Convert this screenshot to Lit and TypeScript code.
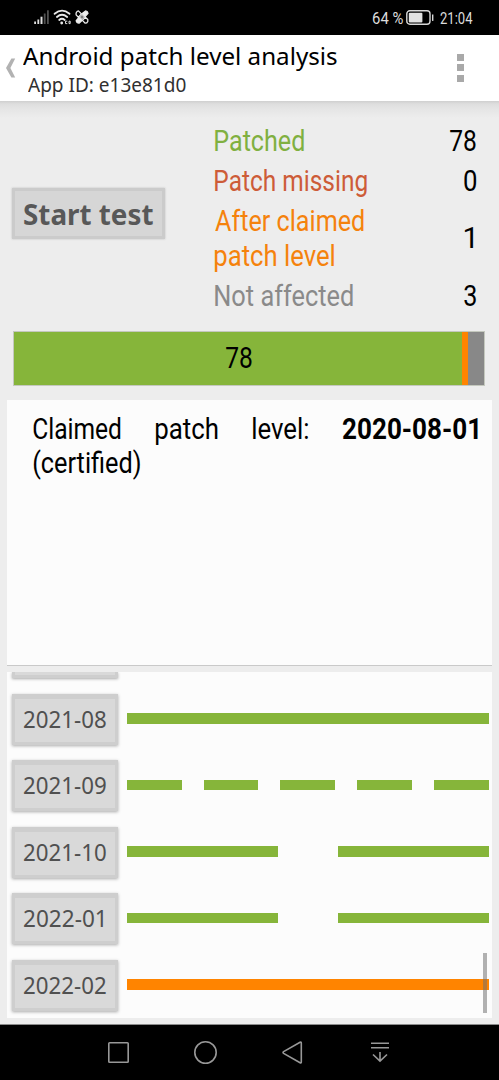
import { LitElement, html, css, svg } from "lit";
import { customElement, property } from "lit/decorators.js";

/** One line of text whose visible ink spans exactly `w` pixels. */
@customElement("fit-text")
class FitText extends LitElement {
  @property() text = "";
  @property({ type: Number }) w = 0;

  static styles = css`
    :host { display: block; flex: none; white-space: nowrap; }
    .ink { display: inline-block; transform-origin: 0 0; }
  `;

  render() {
    const cs = getComputedStyle(this);
    const ctx = document.createElement("canvas").getContext("2d")!;
    ctx.font = `${cs.fontWeight} ${cs.fontSize} ${cs.fontFamily}`;
    const m = ctx.measureText(this.text);
    const k = this.w / (m.actualBoundingBoxLeft + m.actualBoundingBoxRight);
    this.style.width = `${this.w}px`;
    return html`<span class="ink" style="transform: translateX(${m.actualBoundingBoxLeft * k}px) scaleX(${k})">${this.text}</span>`;
  }
}

interface Row { label: string; w: number; parts: number; gap: number; kind: string; }

const ROWS: Row[] = [
  { label: "2021-08", w: 81.7, parts: 1, gap: 0, kind: "ok" },
  { label: "2021-09", w: 81.7, parts: 5, gap: 22, kind: "ok" },
  { label: "2021-10", w: 81.7, parts: 2, gap: 60.3, kind: "ok" },
  { label: "2022-01", w: 79.7, parts: 2, gap: 60.3, kind: "ok" },
  { label: "2022-02", w: 81.7, parts: 1, gap: 0, kind: "late" },
];

@customElement("app-root")
class AppRoot extends LitElement {
  static styles = css`
    :host {
      display: flex; flex-direction: column; width: 499px; height: 1080px;
      overflow: hidden; background: #ededed; color: #000;
      font-family: "Noto Sans", "Open Sans", sans-serif;
    }
    * { box-sizing: border-box; }
    svg { display: block; flex: none; }
    .status {
      height: 34.5px; flex: none; background: #000; color: #dcdcdc; display: flex;
      align-items: flex-start; padding: 0 27px 0 33px; font-family: Roboto, sans-serif;
      font-size: 16.5px; line-height: 37px;
    }
    .spacer { flex: 1; }
    .status .batt { margin: 10px 5.5px 0 3px; }
    .header { height: 66.5px; flex: none; background: #fff; display: flex; align-items: flex-start; }
    .back { margin: 23px 0 0 5px; }
    .titles { margin-left: 6px; display: flex; flex-direction: column; }
    .title { font-size: 24.3px; line-height: 34px; margin-top: 4.5px; }
    .sub { font-size: 19.4px; line-height: 24px; margin: 0 0 0 5px; color: #303030; }
    .dots { margin: 19px 35px 0 0; display: flex; flex-direction: column; gap: 3.5px; }
    .dots i { width: 7px; height: 7px; background: #a9a9a9; }
    .summary {
      height: 230px; flex: none; display: flex; align-items: flex-start;
      background: linear-gradient(#cfcfcf 0, #dedede 3px, #e6e6e6 9px, #ededed 17px);
    }
    .start {
      margin: 86.5px 0 0 12px; width: 153px; height: 51px; background: #d6d6d6;
      border: 3px solid #cbcbcb; box-shadow: 0 0 2px #bdbdbd; display: flex;
      padding-left: 9px; font-weight: 700; font-size: 28px; line-height: 46px; color: #585858;
    }
    .stats {
      margin: 23px 0 0 50px; width: 261px; display: flex; flex-direction: column;
      font-family: Roboto, sans-serif; font-size: 29.3px; gap: 5.5px; line-height: 34.6px;
    }
    .stat { display: flex; justify-content: space-between; align-items: center; }
    .one { margin-right: 2.5px; }
    .green { color: #80b040; }
    .red { color: #cd5c38; }
    .orange { color: #f5820c; }
    .gray { color: #8a8a8a; }
    .total {
      height: 55px; flex: none; margin: 0 14px 0 13px; border: 1.5px solid #c4c8be;
      display: grid; grid-template-columns: 448px 6px 1fr; font-family: Roboto, sans-serif;
      font-size: 29.3px; line-height: 53px;
    }
    .total .ok { display: flex; justify-content: center; padding-left: 1px; }
    .ok { background: #86b53a; }
    .late { background: #ff8400; }
    .na { background: #888; }
    .card {
      height: 265.5px; flex: none; margin: 14px 7px 0; background: #fcfcfc;
      border-bottom: 1.5px solid #c9c9c9; padding: 11.5px 13px 0 26px;
      font-family: Roboto, sans-serif; font-size: 29.3px; line-height: 34.4px;
    }
    .line { display: flex; }
    .line .patch { margin-left: 35.8px; }
    .line .level { margin-left: 35px; }
    .line .date { margin-left: 34px; font-weight: 700; }
    .list {
      height: 346.5px; flex: none; margin: 6px 7px 0; background: #fcfcfc; position: relative;
      overflow: hidden; padding: 0 3.3px 0 5px; display: flex; flex-direction: column;
    }
    .row { height: 66.5px; flex: none; display: flex; align-items: center; }
    .row.cut { height: 22px; align-items: flex-start; }
    .btn {
      width: 106px; height: 51px; flex: none; background: #d9d9d9; border: solid #cecece;
      border-width: 5px 3px 3px; box-shadow: 0 1px 3px #aaa; display: flex; padding-left: 9.3px;
      font-size: 22.8px; line-height: 42px; color: #505050;
    }
    .row .btn { margin-bottom: 15.5px; }
    .row.cut .btn { height: 6px; border-top: 0; margin: 0; }
    .track { flex: 1; height: 10.5px; margin: 0 0 17px 9px; display: flex; }
    .track i { flex: 1; }
    .thumb {
      position: absolute; right: 5px; bottom: 5px; width: 4.5px; height: 60px;
      background: rgba(112, 112, 112, 0.54);
    }
    .nav {
      flex: 1; margin-top: 5.5px; background: #000; border-top: 1px solid #8b8b8b;
      display: flex; padding: 16px 0 0 107px; gap: 62px;
    }
  `;

  private stat(label: unknown, cls: string, value: string, w: number) {
    return html`<div class="stat">
      <div class=${cls}>${label}</div>
      <fit-text class=${value === "1" ? "one" : ""} text=${value} w=${w}></fit-text>
    </div>`;
  }

  private row(r: Row) {
    return html`<div class="row">
      <div class="btn"><fit-text text=${r.label} w=${r.w}></fit-text></div>
      <div class="track" style="gap: ${r.gap}px">
        ${Array.from({ length: r.parts }, () => html`<i class=${r.kind}></i>`)}
      </div>
    </div>`;
  }

  render() {
    return html`
      <div class="status">
        <svg width="58" height="34" viewBox="33 0 58 34" fill="none">
          <g fill="#e0e0e0">
            <rect x="34.2" y="21.5" width="1.8" height="2.5"/>
            <rect x="37.4" y="19.5" width="1.8" height="4.5"/>
            <rect x="40.5" y="16.7" width="2" height="7.3"/>
            <rect x="43.8" y="13.5" width="1.8" height="10.5" fill="#505050"/>
            <rect x="47" y="10.3" width="1.8" height="13.7" fill="#505050"/>
          </g>
          <g stroke="#e8e8e8" stroke-width="1.8" stroke-linecap="round">
            <path d="M54.6 13.8Q62 7.4 69.5 13.8"/>
            <path d="M56.9 17Q62 12.6 67.2 17"/>
            <path d="M59.2 20Q62 17.6 64.7 20"/>
          </g>
          <circle cx="61.7" cy="23" r="1.4" fill="#e8e8e8"/>
          <path d="M67.3 21.2h-1.8v2.4h1.8M69 21.2v2.4h1.2v-2.4z" stroke="#ddd" stroke-width="1"/>
          <g stroke="#ececec" stroke-width="1.3" stroke-linejoin="round">
            <path d="M78.4 10.9l3 3-3 3.4-2.3-2.4v-2q.8-1.8 2.3-2z"/>
            <path d="M85.6 10.9q2.2.4 2.4 2.4l-3.4 3.8-3-3z" fill="#ececec"/>
            <path d="M79.2 17.2l3 3-3.2 3q-2.4-.2-2.8-2.6z" fill="#ececec"/>
            <path d="M85.4 17.2l2.4 2.2v2q-.8 1.8-2.6 1.8l-2.8-2.8z"/>
          </g>
          <path d="M82 14.2l2.8 2.8-2.8 2.8-2.8-2.8z" fill="#b8b8b8"/>
          <circle cx="82" cy="17" r=".8" fill="#333"/>
        </svg>
        <div class="spacer"></div>
        <fit-text text="64 %" w="30.3"></fit-text>
        <svg class="batt" width="28" height="16" viewBox="0 0 28 16" fill="none">
          <rect x=".8" y=".8" width="23.2" height="13.4" rx="3" stroke="#d8d8d8" stroke-width="1.4"/>
          <rect x="2.8" y="2.8" width="13.6" height="9.6" rx="1" fill="#e2e2e2"/>
          <rect x="26" y="4.5" width="1.4" height="6.4" fill="#d8d8d8"/>
        </svg>
        <fit-text text="21:04" w="32.3"></fit-text>
      </div>

      <div class="header">
        <svg class="back" width="12" height="20" viewBox="0 0 12 20"><path d="M6.4.5h3.8L5.4 10l4.8 9.5H6.4L1 10z" fill="#b2b2b2"/></svg>
        <div class="titles">
          <fit-text class="title" text="Android patch level analysis" w="314"></fit-text>
          <fit-text class="sub" text="App ID: e13e81d0" w="158.2"></fit-text>
        </div>
        <div class="spacer"></div>
        <div class="dots"><i></i><i></i><i></i></div>
      </div>

      <div class="summary">
        <div class="start"><fit-text text="Start test" w="129.3"></fit-text></div>
        <div class="stats">
          ${this.stat(html`<fit-text text="Patched" w="89"></fit-text>`, "green", "78", 25.6)}
          ${this.stat(html`<fit-text text="Patch missing" w="152"></fit-text>`, "red", "0", 12.3)}
          ${this.stat(
            html`<fit-text text="After claimed" w="149"></fit-text><fit-text text="patch level" w="119"></fit-text>`,
            "orange", "1", 9)}
          ${this.stat(html`<fit-text text="Not affected" w="138"></fit-text>`, "gray", "3", 12)}
        </div>
      </div>

      <div class="total">
        <div class="ok"><fit-text text="78" w="25.6"></fit-text></div>
        <div class="late"></div>
        <div class="na"></div>
      </div>

      <div class="card">
        <div class="line">
          <fit-text text="Claimed" w="87.7"></fit-text>
          <fit-text class="patch" text="patch" w="62"></fit-text>
          <fit-text class="level" text="level:" w="55.5"></fit-text>
          <fit-text class="date" text="2020-08-01" w="134.8"></fit-text>
        </div>
        <fit-text text="(certified)" w="107.5"></fit-text>
      </div>

      <div class="list">
        <div class="row cut"><div class="btn"></div></div>
        ${ROWS.map((r) => this.row(r))}
        <div class="thumb"></div>
      </div>

      <div class="nav">
        ${[
          svg`<rect x="1.8" y="1.8" width="19.4" height="19.4" rx=".8"/>`,
          svg`<circle cx="11.5" cy="11.5" r="10.7"/>`,
          svg`<path d="M20.3 2v19q0 1.4-1.2.7L2.6 12.4q-1.2-.9 0-1.8L19.1 1.3q1.2-.7 1.2.7z"/>`,
          svg`<path d="M3 2.2h18M3 6.8h18M12 11v9M5 13.5l7 6.7 7-6.7"/>`,
        ].map((g) => html`<svg width="25" height="24" viewBox="0 0 25 24" fill="none" stroke="#989898" stroke-width="1.6">${g}</svg>`)}
      </div>
    `;
  }
}
